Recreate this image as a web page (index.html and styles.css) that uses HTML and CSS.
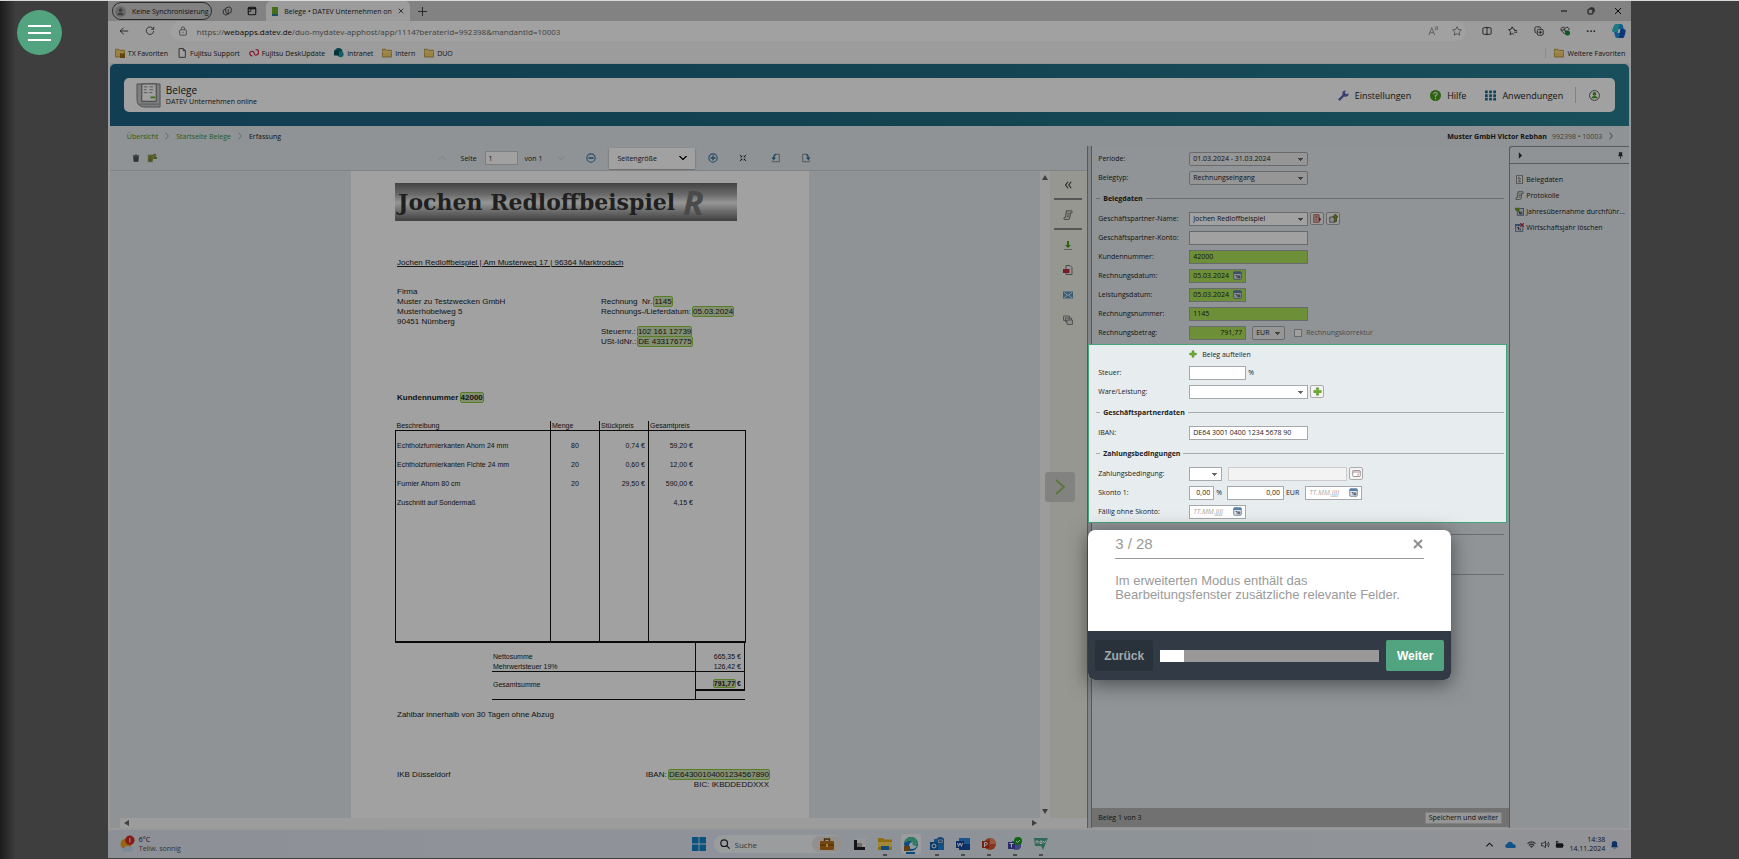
FILE: index.html
```html
<!DOCTYPE html>
<html lang="de">
<head>
<meta charset="utf-8">
<title>Belege – DATEV Unternehmen online</title>
<link rel="stylesheet" href="styles.css">
</head>
<body>
<svg class="defs" aria-hidden="true">
  <symbol id="folder" viewBox="0 0 12 12"><path d="M.5 1.500h4l1.300 1.300h5.700v8H.5z" fill="#f2cf6b" stroke="#b08a2a"/><path d="M.5 4.500h11" stroke="#fbe59a"/></symbol>
  <symbol id="calendar" viewBox="0 0 12 12"><rect x="1" y="1" width="10" height="10" rx="1" fill="#dfe6ee" stroke="#4b6684"/><path d="M1 1h10v3H1z" fill="#5a7fa6"/><path d="M3.500 6h2v3M7 6.500h2V9H7z" fill="none" stroke="#334"/></symbol>
  <symbol id="plus" viewBox="0 0 12 12"><path d="M4.500 1h3v3.500H11v3H7.500V11h-3V7.500H1v-3h3.500z" fill="#6cab2c" stroke="#4f8a1c" stroke-width=".6"/></symbol>
  <symbol id="scroll" viewBox="0 0 12 12"><path d="M4 1h6.500q1 1 0 2.500H9L8 10q-.5 1.500-2 1.500H1.500Q.5 10 1.500 9H3z" fill="#e2e6dc" stroke="#555"/><path d="M5 4h3M5 6h2.500M4.500 8H7" stroke="#777"/></symbol>
  <symbol id="doc" viewBox="0 0 12 12"><path d="M2 .5h8v11H2z" fill="#eee" stroke="#666"/><path d="M4 3h2M4 5h4M5 7h2M4 9h4" stroke="#555"/></symbol>
  <symbol id="chev" viewBox="0 0 6 12"><path d="M1 1l4 5-4 5" fill="none" stroke="currentColor"/></symbol>
</svg>
<div class="topline"></div>
<button class="menu" aria-label="Menü"><span></span><span></span><span></span></button>

<div class="window">
  <header class="tabs">
    <button class="profile"><svg viewBox="0 0 12 12"><circle cx="6" cy="6" r="6" fill="#a9a9a9"/><circle cx="6" cy="4.500" r="2" fill="#666"/><path d="M2.500 10q0-3 3.500-3t3.500 3z" fill="#666"/></svg>Keine Synchronisierung</button>
    <svg class="i10 ws" viewBox="0 0 12 12"><path d="M4.500 2.500l4-1.500 2.500 1.500v5L7.500 9.500l-3-1.500zM4.500 3.500L1.500 5v4l3 2 3-1.500M7.500 4v5.500" fill="none" stroke="#333"/></svg>
    <svg class="i10" viewBox="0 0 12 12"><rect x="1.500" y="1.500" width="9" height="9" rx="1.500" fill="none" stroke="#222" stroke-width="1.400"/><path d="M1.500 3h9" stroke="#222" stroke-width="2"/><path d="M4.500 3v3.500h-3" fill="none" stroke="#222"/></svg>
    <div class="tab"><i class="fav"></i><span>Belege • DATEV Unternehmen on</span><button aria-label="Tab schließen"><svg viewBox="0 0 8 8"><path d="M1 1l6 6M7 1L1 7" stroke="#222"/></svg></button></div>
    <button class="newtab" aria-label="Neuer Tab"><svg viewBox="0 0 10 10"><path d="M5 0v10M0 5h10" stroke="#333"/></svg></button>
    <div class="wincontrols">
      <button aria-label="Minimieren"><svg viewBox="0 0 8 8"><path d="M1 4h6" stroke="#111"/></svg></button>
      <button aria-label="Wiederherstellen"><svg viewBox="0 0 8 8"><rect x="1" y="2" width="5" height="5" rx="1" fill="none" stroke="#111"/><path d="M3 1h3q1 0 1 1v3" fill="none" stroke="#111"/></svg></button>
      <button aria-label="Schließen"><svg viewBox="0 0 8 8"><path d="M1 1l6 6M7 1L1 7" stroke="#111"/></svg></button>
    </div>
  </header>

  <div class="address">
    <button aria-label="Zurück"><svg viewBox="0 0 12 12"><path d="M11 6H1.500M5.500 2l-4 4 4 4" fill="none" stroke="#222"/></svg></button>
    <button aria-label="Neu laden"><svg viewBox="0 0 12 12"><path d="M10 3.500A4.500 4.500 0 1 0 10.500 6M10.500 1v3h-3" fill="none" stroke="#333"/></svg></button>
    <div class="urlbar">
      <svg viewBox="0 0 12 12"><rect x="2" y="4.500" width="8" height="6.500" rx="1" fill="none" stroke="#666"/><path d="M4 4.500V3q0-2 2-2t2 2v1.500M6 7v1.500" fill="none" stroke="#666"/></svg>
      <a href="#">https://<b>webapps.datev.de</b>/duo-mydatev-apphost/app/1114?beraterId=992398&amp;mandantId=10003</a>
      <svg class="end" viewBox="0 0 12 12"><path d="M1 11L4.500 2 8 11M2.200 8h4.600M8.500 1q1.500 1.500.5 4M10.500 0q1.500 2.500.5 5" fill="none" stroke="#888"/></svg>
      <svg viewBox="0 0 12 12"><path d="M6 .8l1.600 3.400 3.700.5-2.700 2.600.7 3.700L6 9.200 2.700 11l.7-3.700L.7 4.700l3.700-.5z" fill="none" stroke="#777"/></svg>
    </div>
    <div class="tools">
      <svg viewBox="0 0 12 12"><rect x="1" y="2" width="10" height="8" rx="1.500" fill="none" stroke="#222"/><path d="M6 1v10" stroke="#222"/></svg>
      <svg viewBox="0 0 12 12"><path d="M8.500 4L6.500 3.800 5 1 3.700 3.800.7 4.500 3 6.800 2.500 10.500 5 9l2 1M7.500 5.500H11M7.500 7.500H11" fill="none" stroke="#222"/></svg>
      <svg viewBox="0 0 12 12"><rect x="4" y="4" width="7" height="7" rx="1.500" fill="none" stroke="#222"/><path d="M3 8.500Q1 8 1 6V3q0-2 2-2h3q2 0 2.500 2M7.500 5.500v4M5.500 7.500h4" fill="none" stroke="#222"/></svg>
      <svg viewBox="0 0 12 12"><path d="M6 10L1.500 5.500q-1.200-2.500 1-3.800Q4.500.8 6 3q1.500-2.200 3.500-1.300 2 1.200 1 3.300M2 5h2l1-1.500L6.500 7l1-2" fill="none" stroke="#222"/><circle cx="9" cy="8.500" r="3" fill="#1a8a2e"/></svg>
      <svg viewBox="0 0 12 12"><path d="M1 6h2M5 6h2M9 6h2" stroke="#111" stroke-width="1.500"/></svg>
      <svg class="copilot" viewBox="0 0 14 14"><path d="M5 0h4q1.500 0 2 2l1 4h1q1 1 .5 3L12 13q-.5 1-2 1H5q-1.500 0-2-2L2 8Q0 8 .3 6L2 2Q2.500 0 5 0z" fill="#1f8fe0"/><path d="M5 0h3L5 8H2Q0 8 .3 6L2 2Q2.500 0 5 0z" fill="#2bc3cf"/><path d="M8 5h3q2 0 2.500 1L12 13q-.5 1-2 1H7z" fill="#1757c2"/><path d="M6.500 5h2L7.500 9h-2z" fill="#fff"/></svg>
    </div>
  </div>

  <nav class="bookmarks">
    <a href="#"><svg viewBox="0 0 12 12"><path d="M.5 1.500h4l1.300 1.300h5.700v8H.5z" fill="#f2cf6b" stroke="#b08a2a"/><path d="M6 6.500h6V12H6z" fill="#9a6d12"/></svg>TX Favoriten</a>
    <a href="#"><svg viewBox="0 0 12 12"><path d="M2.500.7h5l2.500 2.500v8H2.500zM7.500.7v2.500H10" fill="#fff" stroke="#333"/></svg>Fujitsu Support</a>
    <a href="#"><svg viewBox="0 0 12 12"><path d="M8 2q3.500-.5 3.500 3T8 8.500Q6.500 8.500 6 6t-2.500-2Q1 4 1 6.500T4 9.500" fill="none" stroke="#d42a4d" stroke-width="1.500"/></svg>Fujitsu DeskUpdate</a>
    <a href="#"><svg viewBox="0 0 12 12"><circle cx="5.500" cy="4.500" r="4.500" fill="#0b6a73"/><circle cx="8" cy="7.500" r="3.500" fill="#1c98a3"/><rect y="3" width="6" height="6" fill="#05505a"/></svg>Intranet</a>
    <a href="#"><svg><use href="#folder"/></svg>Intern</a>
    <a href="#"><svg><use href="#folder"/></svg>DUO</a>
    <a class="more" href="#"><svg><use href="#folder"/></svg>Weitere Favoriten</a>
  </nav>

  <section class="app">
    <header class="banner">
      <div class="card">
        <svg class="logo" viewBox="0 0 26 26"><path d="M1 1h24v24H9Q1 25 1 17z" fill="#c4c7c9" stroke="#7d8083"/><path d="M6 1h15v18H6z" fill="#fff" stroke="#666"/><path d="M8 4h4M14 4h4M8 7h3M14 7h4M8 10h4M14 10h3" stroke="#888"/><path d="M15 15h5" stroke="#69b32d" stroke-width="2"/><path d="M4 22h20" stroke="#8a8d90"/></svg>
        <div class="title"><h1>Belege</h1><p>DATEV Unternehmen online</p></div>
        <nav>
          <a href="#"><svg viewBox="0 0 12 12"><path d="M1 11l5-5" stroke="#5a67b5" stroke-width="2.600"/><path d="M11.500 3.500A3.400 3.400 0 1 1 8.500.5L7.500 3 9 4.500z" fill="#5a67b5"/></svg>Einstellungen</a>
          <a href="#"><svg viewBox="0 0 12 12"><circle cx="6" cy="6" r="6" fill="#4a9e1c"/><path d="M4.200 4.500q0-1.800 1.800-1.800t1.800 1.600Q7.800 5.500 6 6.300V7.500M6 8.500V10" fill="none" stroke="#fff" stroke-width="1.200"/></svg>Hilfe</a>
          <a href="#"><svg viewBox="0 0 12 12"><path d="M0 2h12M0 6h12M0 10h12" stroke="#1d6c93" stroke-width="3" stroke-dasharray="3 1.500"/></svg>Anwendungen</a>
          <i></i>
          <button aria-label="Benutzer"><svg viewBox="0 0 12 12"><circle cx="6" cy="6" r="5.400" fill="#fff" stroke="#555"/><circle cx="6" cy="4.300" r="2" fill="#4a9e1c"/><path d="M2.500 9q.5-2.500 3.500-2.500T9.500 9z" fill="#4a9e1c"/></svg></button>
        </nav>
      </div>
    </header>

    <div class="crumbs">
      <a href="#">Übersicht</a><svg><use href="#chev"/></svg><a href="#">Startseite Belege</a><svg><use href="#chev"/></svg><span>Erfassung</span>
      <div class="client"><b>Muster GmbH Victor Rebhan</b><span>992398 • 10003</span><svg><use href="#chev"/></svg></div>
    </div>

    <div class="work">
      <main class="viewer">
        <div class="toolbar">
          <svg class="i8" viewBox="0 0 10 10"><path d="M2 3h6L7.500 9.500h-5zM1 2h8M4 1h2" fill="#555" stroke="#555"/></svg>
          <svg class="i10" viewBox="0 0 12 12"><path d="M1 2h6v9H1z" fill="#8a9a55"/><path d="M3 9l1-3 5-5 2 2-5 5z" fill="#b9a52e" stroke="#565"/><path d="M8 6h4" stroke="#4a8a22" stroke-width="2"/></svg>
          <div class="nav">
            <svg class="i8 faint" viewBox="0 0 10 10"><path d="M1 7l4-4 4 4" fill="none" stroke="#bcc4c9"/></svg>
            <label for="seite">Seite</label><input id="seite" value="1"><span class="of">von 1</span>
            <svg class="i8" viewBox="0 0 10 10"><path d="M1 3l4 4 4-4" fill="none" stroke="#bcc4c9"/></svg>
            <svg class="i10 minus" viewBox="0 0 12 12"><circle cx="6" cy="6" r="5" fill="none" stroke="#37749c" stroke-width="1.300"/><path d="M3 6h6" stroke="#37749c" stroke-width="2"/></svg>
            <select aria-label="Zoom"><option>Seitengröße</option></select>
            <svg class="i10" viewBox="0 0 12 12"><circle cx="6" cy="6" r="5" fill="none" stroke="#37749c" stroke-width="1.300"/><path d="M3 6h6M6 3v6" stroke="#37749c" stroke-width="1.600"/></svg>
            <svg class="i8 fit" viewBox="0 0 10 10"><path d="M1 1l2.500 2.500M9 1L6.500 3.500M1 9l2.500-2.500M9 9L6.500 6.500" stroke="#222"/><path d="M4 1.500V4H1.500zM6 1.500V4h2.500zM4 8.500V6H1.500zM6 8.500V6h2.500z" fill="#222"/></svg>
            <svg class="i10 rot" viewBox="0 0 12 12"><path d="M6.500 1.500H10v9H1.500V9" fill="none" stroke="#777"/><path d="M6.500 1.500Q3.200 2 3.200 7" fill="none" stroke="#37749c" stroke-width="1.800"/><path d="M.5 5.500h5.500L3.200 9z" fill="#37749c"/></svg>
            <svg class="i10" viewBox="0 0 12 12"><path d="M5 1.500H2v9h8.500V9" fill="none" stroke="#777"/><path d="M5.500 1.500Q8.800 2 8.800 7" fill="none" stroke="#37749c" stroke-width="1.800"/><path d="M6 5.500h5.500L8.800 9z" fill="#37749c"/></svg>
          </div>
        </div>
        <div class="stage">
          <div class="canvas">
            <article class="page">
              <div class="brand"><span>Jochen Redloffbeispiel</span><b>R</b></div>
              <p class="sender">Jochen Redloffbeispiel | Am Musterweg 17 | 96364 Marktrodach</p>
              <div class="parties">
                <p>Firma<br>Muster zu Testzwecken GmbH<br>Musterhobelweg 5<br>90451 Nürnberg</p>
                <p><br>Rechnung&nbsp; Nr. <mark>1145</mark><br>Rechnungs-/Lieferdatum: <mark>05.03.2024</mark><br><br>Steuernr.: <mark>102 161 12739</mark><br>USt-IdNr.: <mark>DE 433176775</mark></p>
              </div>
              <p class="kunde">Kundennummer <mark>42000</mark></p>
              <table class="items">
                <thead><tr><th>Beschreibung</th><th>Menge</th><th>Stückpreis</th><th>Gesamtpreis</th></tr></thead>
                <tbody>
                  <tr><td>Echtholzfurnierkanten Ahorn 24 mm</td><td>80</td><td>0,74 €</td><td>59,20 €</td></tr>
                  <tr><td>Echtholzfurnierkanten Fichte 24 mm</td><td>20</td><td>0,60 €</td><td>12,00 €</td></tr>
                  <tr><td>Furnier Ahorn 80 cm</td><td>20</td><td>29,50 €</td><td>590,00 €</td></tr>
                  <tr><td>Zuschnitt auf Sondermaß</td><td></td><td></td><td>4,15 €</td></tr>
                  <tr class="rest"><td></td><td></td><td></td><td></td></tr>
                </tbody>
              </table>
              <table class="sums">
                <tr><td>Nettosumme</td><td>665,35 €</td></tr>
                <tr class="vat"><td>Mehrwertsteuer 19%</td><td>126,42 €</td></tr>
                <tr class="total"><td>Gesamtsumme</td><td><b><mark>791,77</mark> €</b></td></tr>
                <tr class="end"><td></td><td></td></tr>
              </table>
              <p class="terms">Zahlbar innerhalb von 30 Tagen ohne Abzug</p>
              <div class="bank"><p>IKB Düsseldorf</p><p>IBAN: <mark>DE64300104001234567890</mark><br>BIC: IKBDDEDDXXX</p></div>
            </article>
          </div>
          <div class="vscroll"><svg viewBox="0 0 6 6"><path d="M0 5l3-5 3 5z" fill="#666"/></svg><svg viewBox="0 0 6 6"><path d="M0 1l3 5 3-5z" fill="#666"/></svg></div>
          <aside class="rail">
            <button aria-label="Einklappen"><svg class="i8" viewBox="0 0 10 10"><path d="M5 1L2 5l3 4M9 1L6 5l3 4" fill="none" stroke="#333" stroke-width="1.300"/></svg></button>
            <hr>
            <button aria-label="Protokoll"><svg><use href="#scroll"/></svg></button>
            <hr>
            <button aria-label="Herunterladen"><svg viewBox="0 0 10 10"><path d="M4 1h2v4h2L5 8 2 5h2z" fill="#4a9e1c"/><path d="M1 9.500h8" stroke="#999"/></svg></button>
            <button aria-label="PDF"><svg viewBox="0 0 10 10"><path d="M3 .5h4l2 2v7H3z" fill="#eee" stroke="#777"/><path d="M0 4h6.500v4H0z" fill="#c22d3c"/></svg></button>
            <button aria-label="E-Mail"><svg viewBox="0 0 10 10"><rect y="1.500" width="10" height="7" fill="#5a97bd"/><path d="M1 2.500l4 3 4-3M1 8l3-2.500M9 8L6 5.500" fill="none" stroke="#dfeaf2"/></svg></button>
            <button aria-label="Kopieren"><svg viewBox="0 0 10 10"><path d="M.5 1h6v4.500h-6zM2.500 3h6v4h-6z" fill="#ddd" stroke="#888"/><path d="M4 5h5.500v4.500H4z" fill="#ddd" stroke="#888"/></svg></button>
            <button class="next" aria-label="Nächster Beleg"><svg viewBox="0 0 10 16"><path d="M1 1l8 7-8 7" fill="none" stroke="#8dbb63" stroke-width="1.800"/></svg></button>
          </aside>
        </div>
        <div class="hscroll"><svg viewBox="0 0 6 6"><path d="M5 0L0 3l5 3z" fill="#666"/></svg><svg viewBox="0 0 6 6"><path d="M1 0l5 3-5 3z" fill="#666"/></svg></div>
      </main>

      <form class="form">
        <div class="row"><label for="periode">Periode:</label><select id="periode" class="grey w"><option>01.03.2024 - 31.03.2024</option></select></div>
        <div class="row"><label for="typ">Belegtyp:</label><select id="typ" class="grey w"><option>Rechnungseingang</option></select></div>
        <h2>Belegdaten</h2>
        <div class="row"><label for="gpn">Geschäftspartner-Name:</label><div><select id="gpn" class="w"><option>Jochen Redloffbeispiel</option></select><button type="button" class="sq" aria-label="Konto"><svg viewBox="0 0 12 12"><path d="M1 1h7v10H1z" fill="#e9c9c9" stroke="#a33"/><path d="M3 3h3M3 5h3M3 8h3" stroke="#a33"/><path d="M8 4l3 3-3 3z" fill="#a22"/></svg></button><button type="button" class="sq" aria-label="Neu"><svg viewBox="0 0 12 12"><path d="M1 4h7v7H1z" fill="#ddd" stroke="#555"/><path d="M8.500 0L12 4h-2v6H7V4H5z" fill="#8a9a22" stroke="#562"/></svg></button></div></div>
        <div class="row"><label for="gpk">Geschäftspartner-Konto:</label><input id="gpk" class="w"></div>
        <div class="row"><label for="kdn">Kundennummer:</label><input id="kdn" class="w green" value="42000"></div>
        <div class="row"><label for="rd">Rechnungsdatum:</label><span class="date green"><input id="rd" value="05.03.2024"><svg><use href="#calendar"/></svg></span></div>
        <div class="row"><label for="ld">Leistungsdatum:</label><span class="date green"><input id="ld" value="05.03.2024"><svg><use href="#calendar"/></svg></span></div>
        <div class="row"><label for="rn">Rechnungsnummer:</label><input id="rn" class="w green" value="1145"></div>
        <div class="row"><label for="rb">Rechnungsbetrag:</label><div><input id="rb" class="s green num" value="791,77"><select class="grey cur" aria-label="Währung"><option>EUR</option></select><input type="checkbox" id="korr"><label for="korr" class="muted">Rechnungskorrektur</label></div></div>

        <section class="spot">
          <div class="row split"><span></span><button type="button" class="link"><svg><use href="#plus"/></svg>Beleg aufteilen</button></div>
          <div class="row"><label for="st">Steuer:</label><div><input id="st" class="s"><span class="u">%</span></div></div>
          <div class="row"><label for="wl">Ware/Leistung:</label><div><select id="wl" class="w"><option></option></select><button type="button" class="sq" aria-label="Hinzufügen"><svg><use href="#plus"/></svg></button></div></div>
          <h2>Geschäftspartnerdaten</h2>
          <div class="row"><label for="iban">IBAN:</label><input id="iban" class="w" value="DE64 3001 0400 1234 5678 90"></div>
          <h2>Zahlungsbedingungen</h2>
          <div class="row"><label for="zb">Zahlungsbedingung:</label><div><select id="zb" class="cond"><option></option></select><input class="w off" disabled aria-label="Bedingungstext"><button type="button" class="sq" aria-label="Auswählen"><svg viewBox="0 0 12 12"><rect x="1" y="2" width="10" height="8" rx="1" fill="#fff" stroke="#777"/><path d="M1 4h10M8 6v3" stroke="#a66"/></svg></button></div></div>
          <div class="row"><label for="sk">Skonto 1:</label><div><input id="sk" class="pct num" value="0,00"><span class="u">%</span><input class="s num amt" value="0,00" aria-label="Betrag"><span class="u">EUR</span><span class="date last"><input placeholder="TT.MM.JJJJ" aria-label="Skontodatum"><svg><use href="#calendar"/></svg></span></div></div>
          <div class="row"><label for="fs">Fällig ohne Skonto:</label><span class="date"><input id="fs" placeholder="TT.MM.JJJJ"><svg><use href="#calendar"/></svg></span></div>

          <div class="tour" role="dialog" aria-label="Tour">
            <div class="tour-body">
              <div class="tour-head"><span>3 / 28</span><button type="button" aria-label="Schließen"><svg viewBox="0 0 10 10"><path d="M1 1l8 8M9 1L1 9" stroke="#8f8f8f" stroke-width="2"/></svg></button></div>
              <p>Im erweiterten Modus enthält das Bearbeitungsfenster zusätzliche relevante Felder.</p>
            </div>
            <div class="tour-foot"><button type="button" class="back">Zurück</button><div class="bar"><i></i></div><button type="button" class="go">Weiter</button></div>
          </div>
        </section>
        <h2>Zahlungen</h2>
        <hr class="rule">
        <footer><span>Beleg 1 von 3</span><button type="button">Speichern und weiter</button></footer>
      </form>

      <aside class="panel">
        <div class="panel-head"><svg viewBox="0 0 6 8"><path d="M1 0l4 4-4 4z" fill="#333"/></svg><svg viewBox="0 0 6 8"><path d="M1 0h4v4h1v1H0V4h1zM2.500 5h1v3h-1z" fill="#333"/></svg></div>
        <a href="#"><svg><use href="#doc"/></svg><span>Belegdaten</span></a>
        <a href="#"><svg><use href="#scroll"/></svg><span>Protokolle</span></a>
        <a href="#"><svg viewBox="0 0 12 12"><rect x="3" y="2" width="8.500" height="9" fill="#c9d5e0" stroke="#4b6684"/><path d="M0 1h6v6l-3-1-3-2z" fill="#6c9b22"/><path d="M5 7h2v3M9 6v4" stroke="#334"/></svg><span>Jahresübernahme durchführ...</span></a>
        <a href="#"><svg viewBox="0 0 12 12"><rect x=".5" y="2" width="10" height="9" fill="#dde" stroke="#4b6684"/><path d="M1 2h6v2H1z" fill="#4579ad"/><path d="M7 0l5 5M12 0L7 5" stroke="#c22d3c" stroke-width="1.500"/><path d="M3 6h2v3M7 7v3" stroke="#334"/></svg><span>Wirtschaftsjahr löschen</span></a>
      </aside>
    </div>
  </section>

  <footer class="taskbar">
    <div class="weather"><svg viewBox="0 0 16 18"><circle cx="6.500" cy="9" r="6" fill="#f0a020"/><path d="M3 17q-2-3 1.500-4Q6 10 9 11.500q5-.5 4.500 3.500-.5 2-2 2z" fill="#c6d8f2"/><circle cx="10.500" cy="5" r="5" fill="#d22a1f"/><path d="M10.500 2.500v5" stroke="#fff"/></svg><p>6°C<br><span>Teilw. sonnig</span></p></div>
    <div class="apps">
      <svg viewBox="0 0 14 14"><path d="M0 0h6.600v6.600H0zM7.400 0H14v6.600H7.400zM0 7.400h6.600V14H0zM7.400 7.400H14V14H7.400z" fill="#1583c9"/></svg>
      <label class="search"><svg viewBox="0 0 12 12"><circle cx="5" cy="5" r="4" fill="none" stroke="#222" stroke-width="1.400"/><path d="M8 8l3.500 3.500" stroke="#222" stroke-width="1.400"/></svg><input placeholder="Suche" aria-label="Suche"><span class="case"><svg viewBox="0 0 14 12"><rect y="3" width="14" height="9" rx="1" fill="#b9701a"/><path d="M4.500 3V1h5v2" fill="none" stroke="#7a4308" stroke-width="1.500"/><path d="M0 7h14" stroke="#7a4308"/><path d="M6 6h2v3H6z" fill="#ffd257"/></svg></span></label>
      <svg viewBox="0 0 14 14"><path d="M5 1h9v9H5z" fill="#eee"/><path d="M5 6h5v4H5z" fill="#aaa"/><path d="M2 3h3v7h8v3H2z" fill="#222"/></svg>
      <svg class="run" viewBox="0 0 14 14"><path d="M0 1h5l1.500 1.500H14V13H0z" fill="#e5ad1c"/><path d="M0 5h14v5H0z" fill="#fbd75b"/><path d="M3 9h8v4H3z" fill="#1c78c4"/></svg>
      <span class="active"><svg viewBox="0 0 14 14"><circle cx="7" cy="7" r="7" fill="#1374c6"/><path d="M0 6Q2 0 7 0q6 .5 7 6 0 3-4 3-2-1-1-3Q7 2 0 6z" fill="#4cc79a"/><path d="M5 9q0-4 4-4-2 4 4 4-1.500 3-5 3T5 9z" fill="#e8f5f8"/><path d="M0 9h6v5H0z" fill="#a1631a"/></svg></span>
      <svg class="run" viewBox="0 0 14 14"><path d="M4 2h10v11H4z" fill="#1c83d6"/><path d="M0 5h8v8H0z" fill="#0f5fa8"/><circle cx="4" cy="9" r="2" fill="none" stroke="#fff"/><circle cx="10.500" cy="4" r="4" fill="#2d6fb0"/><path d="M8.500 3h4v2.500h-4z" fill="none" stroke="#cde" stroke-width=".7"/></svg>
      <svg class="run" viewBox="0 0 14 14"><path d="M3 1h11v12H3z" fill="#2f86dd"/><path d="M3 7h11v6H3z" fill="#1750a5"/><path d="M0 4h8v7H0z" fill="#17479b"/><path d="M1.500 6l1 3.500L4 6l1.500 3.500 1-3.500" fill="none" stroke="#fff"/></svg>
      <svg class="run" viewBox="0 0 14 14"><circle cx="8" cy="7" r="6" fill="#d9552f"/><path d="M8 1a6 6 0 0 1 6 6H8z" fill="#f08a63"/><path d="M0 4h7v7H0z" fill="#b5341a"/><path d="M2.500 10V5.500h1.500q1.500 0 1.500 1.200T4 8H2.500" fill="none" stroke="#fff"/></svg>
      <svg class="run" viewBox="0 0 14 14"><path d="M4 4h9v6q-1 3-4.500 3T4 10z" fill="#6c6fd0"/><path d="M0 5h7v7H0z" fill="#4448a8"/><path d="M1.500 6.500h4M3.500 6.500V10.500" stroke="#fff"/><circle cx="10" cy="4" r="4" fill="#16a01c"/><path d="M8 4l1.500 1.500L12 3" fill="none" stroke="#fff"/></svg>
      <svg class="run" viewBox="0 0 14 14"><path d="M0 1h14L9 13 7 9H1z" fill="#4fa68c"/><path d="M2 6.500V4h2v2.500M6 4h2v2.500H6zM9 4l1.500 2L12 3.500" fill="none" stroke="#fff"/></svg>
    </div>
    <div class="tray">
      <svg viewBox="0 0 10 10"><path d="M1.500 7L5 3.500 8.500 7" fill="none" stroke="#222" stroke-width="1.200"/></svg>
      <svg class="cloud" viewBox="0 0 12 10"><path d="M2.500 9Q0 9 0 6.800 0 5 2 4.500 3 2 5.500 2q2.500 0 3.300 2.500Q12 5 12 7.200 12 9 10 9z" fill="#1b83d8"/></svg>
      <svg viewBox="0 0 10 10"><path d="M.5 4q4.500-4 9 0M2 6q3-2.600 6 0" fill="none" stroke="#555" stroke-width="1.400"/><path d="M5 9L3 7q2-1.500 4 0z" fill="#555"/></svg>
      <svg viewBox="0 0 10 10"><path d="M.5 3.500h2L5 1.500v7l-2.500-2h-2zM6.500 3.500q1 1.500 0 3M8 2q2 3 0 6" fill="none" stroke="#444"/></svg>
      <svg viewBox="0 0 10 10"><rect x="1" y="3.500" width="8" height="5" rx="1" fill="#222"/><path d="M9 6h1M2 5V1M1 2h3" stroke="#222" fill="none"/></svg>
      <p>14:38<br>14.11.2024</p>
      <svg viewBox="0 0 10 10"><path d="M1 8l1-1.500V4q0-3 3-3t3 3v2.500L9 8zM4 8.500h2v1H4z" fill="#1450a0"/></svg>
    </div>
  </footer>
</div>
</body>
</html>
```

FILE: styles.css
```css
* { box-sizing: border-box; }
body {
  margin: 0;
  min-height: 100vh;
  padding: 1px 6.2%;
  display: flex;
  overflow: hidden;
  background: linear-gradient(90deg, #2c2c2c, #636363 16px);
  font: 7px/9px "Open Sans", "Noto Sans", sans-serif;
  color: #222;
}
h1, h2, p { margin: 0; font-size: inherit; }
a { color: inherit; text-decoration: none; }
button, input, select { font: inherit; color: inherit; margin: 0; }
button { border: 0; padding: 0; background: none; display: flex; align-items: center; justify-content: center; }
svg { display: block; flex: none; width: 10px; height: 10px; }
.defs { position: absolute; width: 0; height: 0; }
.topline { position: absolute; z-index: 20; top: 0; left: 0; right: 0; height: 1px; background: #d6dad6; }
.menu {
  position: absolute; z-index: 20; left: 17px; top: 10px;
  width: 45px; height: 45px; border-radius: 50%;
  background: #52a480; flex-direction: column; gap: 5px;
}
.menu span { width: 23px; height: 2px; background: #fff; }
.i8, .rail .i8 { width: 8px; height: 8px; }
.i10 { width: 10px; height: 10px; }

.window { flex: 1; min-width: 0; display: flex; flex-direction: column; background: #f3f3f3; }

/* browser chrome */
.tabs { height: 20px; display: flex; align-items: center; padding-left: 4px; background: #cecece; }
.profile { height: 18px; width: 100px; gap: 6px; border: 1px solid #444; border-radius: 9px; }
.profile svg { width: 11px; height: 11px; }
.ws { margin: 0 15px 0 10px; }
.tab { align-self: stretch; margin-left: 9px; width: 144px; padding: 0 6px; display: flex; align-items: center; gap: 6px; border-radius: 5px 5px 0 0; background: #f7f7f7; }
.tab span { flex: 1; white-space: nowrap; }
.tab button svg { width: 6px; height: 6px; }
.fav { width: 9px; height: 9px; background: #6fae2a; border-bottom: 2px solid #2c7f98; }
.newtab { margin-left: 8px; }
.newtab svg { width: 9px; height: 9px; }
.wincontrols { margin-left: auto; padding-right: 9px; display: flex; gap: 19px; }
.wincontrols svg { width: 8px; height: 8px; }
.address { height: 20px; display: flex; align-items: center; padding-left: 11px; gap: 16px; background: #f7f7f7; }
.urlbar { flex: 1; height: 20px; padding: 0 4px 0 7px; display: flex; align-items: center; gap: 9px; background: #fff; border-radius: 10px; font-size: 8px; color: #666; }
.urlbar b { font-weight: 400; color: #111; }
.urlbar .end { margin: 0 5px 0 auto; }
.tools { display: flex; align-items: center; gap: 16px; padding-right: 5px; }
.tools .copilot { width: 14px; height: 14px; }
.bookmarks { height: 22px; display: flex; align-items: center; gap: 9px; padding: 2px 6px 0 7px; background: #f7f7f7; }
.bookmarks a { display: flex; align-items: center; gap: 3px; }
.bookmarks .more { margin-left: auto; padding-left: 8px; border-left: 1px solid #ddd; }

/* application header */
.app { flex: 1; margin: 0 2px; padding-top: 1px; display: flex; flex-direction: column; background: #e3e9ee; }
.banner { padding: 14px; border-radius: 5px 5px 0 0; background: linear-gradient(90deg, #1c6282, #1f6a80 50%, #287e90); }
.card { height: 34px; padding: 0 15px 0 12px; display: flex; align-items: center; gap: 5px; border-radius: 5px; background: #fff; }
.logo { width: 25px; height: 25px; }
.title h1 { font-weight: 400; font-size: 10px; line-height: 13px; }
.card nav { margin-left: auto; display: flex; align-items: center; gap: 19px; font-size: 9px; }
.card nav a { display: flex; align-items: center; gap: 6px; }
.card nav svg { width: 11px; height: 11px; }
.card nav i { width: 1px; height: 16px; margin-right: -6px; margin-left: -7px; background: #ccc; }
.crumbs { height: 20px; display: flex; align-items: center; gap: 5px; padding: 0 14px 0 17px; }
.crumbs a { color: #3f8f1e; }
.crumbs svg { width: 6px; height: 8px; color: #888; margin: 0 1px; }
.client { margin-left: auto; display: flex; align-items: center; gap: 5px; }
.client span { color: #666; }
.client svg { color: #222; }
.work { flex: 1; display: flex; min-height: 0; }

/* document viewer */
.viewer { flex: 1; min-width: 0; display: flex; flex-direction: column; }
.toolbar { height: 24px; display: flex; align-items: center; padding-left: 22px; gap: 7px; }
.nav { margin: 0 auto; padding-right: 2px; display: flex; align-items: center; }
.nav label { margin: 0 8px 0 15px; }
.nav input { width: 33px; height: 14px; padding: 0 3px; border: 1px solid #c5cbd0; background: #fff; }
.of { margin: 0 15px 0 7px; }
.minus { margin: 0 13px 0 21px; }
.nav select {
  width: 86px; height: 21px; margin-right: 13px; padding: 0 8px; appearance: none; border: 0; box-shadow: 0 1px 2px #999;
  background: linear-gradient(45deg, transparent 50%, #222 50%, #222 64%, transparent 64%) 70px 8px / 4px 4px no-repeat,
              linear-gradient(-45deg, transparent 50%, #222 50%, #222 64%, transparent 64%) 74px 8px / 4px 4px no-repeat, #fff;
}
.fit { margin: 0 24px 0 21px; }
.rot { margin-right: 20px; }
.stage { flex: 1; display: flex; border-top: 1px solid #ccd2d6; }
.canvas { flex: 1; padding-left: 10px; display: flex; justify-content: center; }
.page { width: 458px; padding: 12px 40px 0 44px; background: #fff; font: 8px/10px "Liberation Sans", sans-serif; color: #222; }
.brand { width: 342px; height: 38px; padding-left: 3px; display: flex; align-items: center; gap: 8px; background: linear-gradient(#6a6a6a, #a9a9a9 30%, #eee 52%, #a9a9a9 75%, #666); color: #333; }
.brand span { font: 700 22px/30px "DejaVu Serif", serif; }
.brand b { font: italic 700 34px/36px "Open Sans", sans-serif; color: #777; }
.sender { margin: 37px 0 19px 2px; text-decoration: underline; }
.parties { display: grid; grid-template-columns: 204px 1fr; padding-left: 2px; }
mark { color: inherit; background: #cfe3b4; outline: 1px solid #8cc63f; border-radius: 1px; }
.kunde { margin: 46px 0 18px 2px; font-weight: 700; }
table { border-collapse: collapse; font-size: 7px; line-height: 9px; }
td, th { padding: 0; font-weight: 400; text-align: left; }
.items { width: 350px; table-layout: fixed; }
.items th { width: 49px; height: 9px; padding-left: 1px; border-left: 1px solid #111; border-bottom: 1px solid #111; }
.items th:first-child { width: 155px; border-left: 0; }
.items th:last-child { width: 97px; }
.items td { height: 19px; padding-top: 10px; border-left: 1px solid #111; border-right: 1px solid #111; vertical-align: top; }
.items td:first-child { padding-left: 1px; }
.items td:nth-child(2) { text-align: center; }
.items td:nth-child(3) { text-align: right; padding-right: 3px; }
.items td:nth-child(4) { text-align: right; padding-right: 52px; }
.items .rest td { height: 135px; border-bottom: 2px solid #111; }
.sums { width: 253px; margin-left: 97px; }
.sums td { height: 10px; vertical-align: bottom; padding: 0 3px 0 1px; }
.sums td + td { width: 49px; text-align: right; border-left: 1px solid #111; border-right: 1px solid #111; }
.sums tr:first-child td { height: 18px; }
.sums .vat td { border-bottom: 1px solid #111; }
.sums .total td { height: 19px; padding-bottom: 1px; }
.sums .total td + td { border-bottom: 2px solid #111; }
.sums .end td { height: 9px; border-right: 0; border-bottom: 1px solid #111; }
.terms { margin: 10px 0 50px 2px; }
.bank { display: flex; justify-content: space-between; padding-left: 2px; }
.bank p + p { text-align: right; }
.vscroll { width: 10px; padding: 4px 2px; background: #f7f7f7; display: flex; flex-direction: column; justify-content: space-between; }
.vscroll svg, .hscroll svg { width: 6px; height: 6px; }
.hscroll { height: 10px; margin-left: 10px; padding: 2px 50px 2px 4px; display: flex; justify-content: space-between; background: #f7f7f7; }
.rail { position: relative; width: 37px; padding: 1px 5px 1px 4px; background: #f0f0e6; display: flex; flex-direction: column; }
.rail button { height: 25px; }
.rail hr { width: 100%; height: 2px; margin: 1px 0 2px; border: 0; background: #888; }
.rail .next { position: absolute; right: 12px; top: 301px; width: 30px; height: 30px; border-radius: 3px; background: #cfcfcc; }
.next svg { width: 12px; height: 16px; }

/* entry form */
.form { width: 422px; padding: 3px 5px 0 10px; display: flex; flex-direction: column; border-left: 1px solid #8a8d90; background: linear-gradient(90deg, #cdd3d7 3px, #8a8d90 3px, #8a8d90 4px, #e5eaee 4px); }
.row { height: 19px; display: grid; grid-template-columns: 91px 1fr; align-items: center; }
.row > div { display: flex; align-items: center; }
.form h2 { height: 22px; margin-left: -2px; display: flex; align-items: center; gap: 3px; font-weight: 700; }
.form h2::before, .form h2::after { content: ""; width: 4px; height: 1px; background: #a9adb0; }
.form h2::after { flex: 1; }
.form select, .form input, .date { height: 14px; border: 1px solid #a5a9ac; background: #fff; padding: 0 3px; border-radius: 0; }
.form select { appearance: none; background: conic-gradient(from 315deg at 50% 100%, #666 90deg, transparent 0) right 4px top 5px / 5px 3px no-repeat, #fff; }
.form select.grey { background-color: #eee; border-radius: 2px; }
.form .w { width: 119px; }
.form .s { width: 57px; }
.form .green { background: #abe35a; }
.num { text-align: right; }
.date { width: 57px; display: inline-flex; align-items: center; }
.form .date input { flex: 1; width: 0; height: 12px; border: 0; padding: 0; background: none; }
.date input::placeholder { font-style: italic; color: #aaa; }
.date svg { width: 9px; height: 9px; }
.form .cur { width: 33px; margin: 0 9px 0 6px; }
.form input[type="checkbox"] { appearance: none; width: 8px; height: 8px; padding: 0; margin-right: 4px; }
.muted { color: #777; }
.sq { width: 14px; height: 13px; margin-left: 2px; border: 1px solid #aaa; border-radius: 2px; background: #f4f4f4; }
.sq svg { width: 9px; height: 9px; }
.u { margin: 0 2px; }
.form .cond { width: 33px; }
.form .off { margin-left: 6px; background: #f3f3f3; border-color: #ccc; }
.form .pct { width: 25px; }
.form .amt { margin-left: 3px; }
.form .last { margin-left: 4px; }
.spot {
  position: relative; z-index: 5;
  margin: 2px -3px 0 -10px; padding: 0 2px 1px 9px;
  border: 1px solid #45a57d; background: #e7ecef;
  box-shadow: 0 0 0 4000px rgba(0, 0, 0, .37);
}
.row.split { height: 18px; }
.link { justify-self: start; gap: 5px; }
.link svg { width: 8px; height: 8px; }
.rule { width: 100%; height: 1px; margin: 29px 0 0; border: 0; background: #a9adb0; }
.form footer { height: 19px; margin: auto -5px 1px -6px; padding: 0 7px 0 6px; display: flex; align-items: center; justify-content: space-between; background: #b3b3b3; }
.form footer button { height: 12px; padding: 0 3px; background: #eee; border: 1px solid #ccc; }

/* guided tour bubble */
.tour { position: absolute; top: calc(100% + 8px); left: -1px; width: 363px; border-radius: 7px; overflow: hidden; font: 13px/14px "Liberation Sans", sans-serif; color: #9a9a9a; background: #fff; box-shadow: 0 4px 20px rgba(0, 0, 0, .5); }
.tour-body { height: 101px; padding: 0 27px; }
.tour-head { height: 29px; display: flex; align-items: center; justify-content: space-between; border-bottom: 1px solid #999; font-size: 15px; }
.tour-head button { margin-right: 1px; }
.tour-body p { padding-top: 15px; }
.tour-foot { height: 49px; padding: 0 7px; display: flex; align-items: center; gap: 7px; background: #323b45; font-size: 12px; }
.tour-foot button { width: 58px; height: 31px; border-radius: 2px; font-weight: 700; }
.tour-foot .back { background: #29323b; color: #a3a8ac; }
.tour-foot .go { background: #52a480; color: #fff; }
.bar { flex: 1; height: 12px; background: #999; }
.bar i { display: block; width: 11%; height: 100%; background: #fff; }

/* side panel */
.panel { width: 120px; border: solid #8a8d90; border-width: 1px 0 0 1px; border-radius: 3px 0 0 0; }
.panel-head { height: 17px; margin-bottom: 7px; padding: 0 6px 0 8px; display: flex; align-items: center; justify-content: space-between; border-bottom: 1px solid #8a8d90; }
.panel-head svg { width: 5px; height: 7px; }
.panel a { height: 16px; padding-left: 5px; display: flex; align-items: center; gap: 2px; }
.panel a svg { width: 9px; height: 9px; }
.panel span { white-space: nowrap; }

/* taskbar */
.taskbar { height: 28px; margin-top: 2px; display: grid; grid-template-columns: 1fr auto 1fr; align-items: center; background: linear-gradient(90deg, #e0e4f0, #e3e8f4 40%, #dfe9f0 60%, #e9e9f0); }
.weather { display: flex; align-items: center; gap: 4px; padding-left: 12px; }
.weather svg { width: 15px; height: 18px; }
.weather span { color: #555; }
.apps { display: flex; align-items: center; gap: 12px; }
.apps > svg, .active svg { width: 14px; height: 14px; }
.apps > .run { height: 24px; padding: 5px 0; background: linear-gradient(#777, #777) center bottom / 4px 2px no-repeat; }
.search { width: 129px; height: 18px; margin: 0 -3px 0 -4px; padding: 0 0 0 6px; display: flex; align-items: center; gap: 5px; border-radius: 9px; background: #f6f7fa; }
.search input { flex: 1; width: 0; border: 0; background: none; padding: 0; font-size: 8px; }
.search input::placeholder { color: #555; }
.case { padding: 2px 9px 2px 8px; border-radius: 8px; background: #e8e6e4; }
.case svg { width: 14px; height: 12px; }
.active { margin: 0 -3px; padding: 3px; border-radius: 3px; background: linear-gradient(#1374c6, #1374c6) center bottom / 9px 2px no-repeat, #f6f7fa; }
.tray { justify-self: end; padding-right: 12px; display: flex; align-items: center; gap: 5px; text-align: right; }
.tray svg { width: 9px; height: 9px; }
.tray .cloud { width: 11px; margin: 0 6px; }
```
